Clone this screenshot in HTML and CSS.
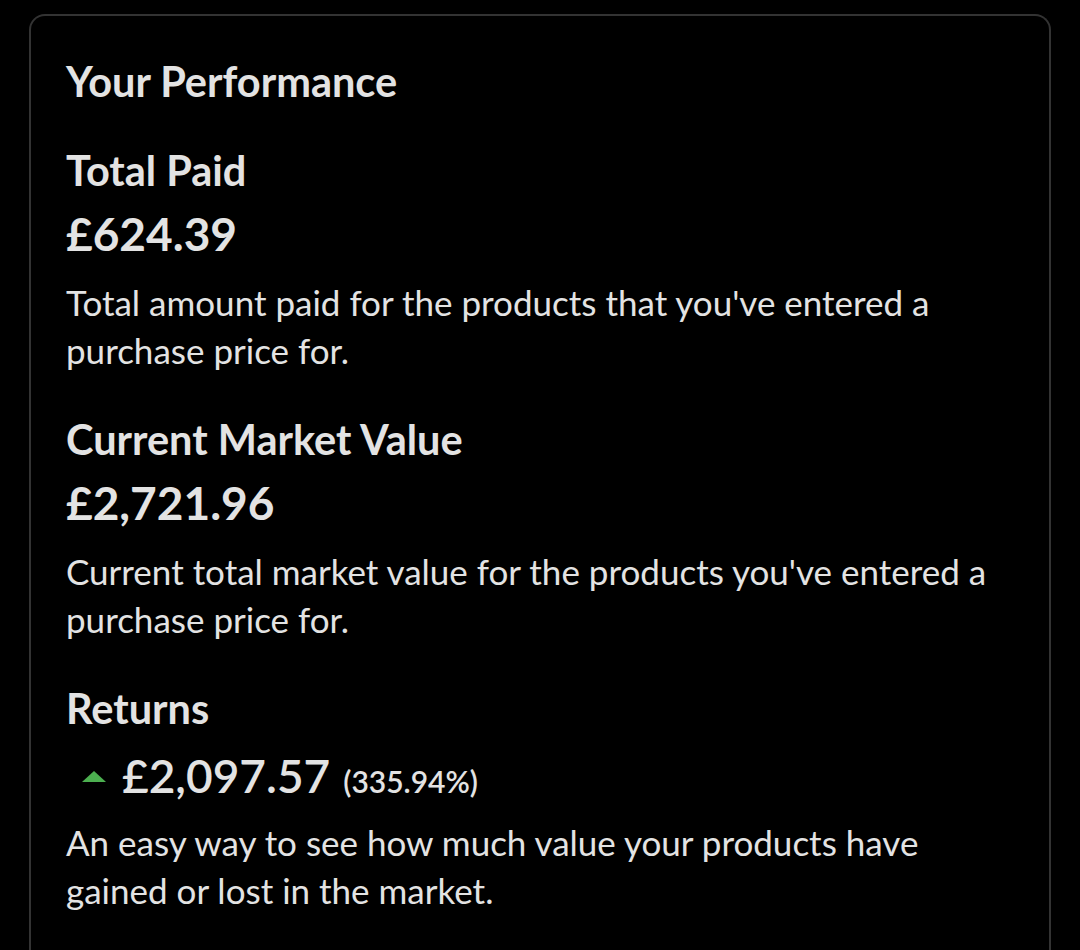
FILE: index.html
```html
<!DOCTYPE html>
<html>
<head>
<meta charset="utf-8">
<link rel="stylesheet" href="styles.css">
</head>
<body>
<div class="card">
  <h2 class="title">Your Performance</h2>
  <section class="stat">
    <h3 class="label">Total Paid</h3>
    <div class="value">£624.39</div>
    <p class="desc">Total amount paid for the products that you've entered a purchase price for.</p>
  </section>
  <section class="stat">
    <h3 class="label">Current Market Value</h3>
    <div class="value">£2,721.96</div>
    <p class="desc">Current total market value for the products you've entered a purchase price for.</p>
  </section>
  <section class="stat">
    <h3 class="label">Returns</h3>
    <div class="returns">
      <svg class="arrow" width="24" height="11" viewBox="0 0 24 11"><polygon points="0,11 12,0 24,11" fill="#4caf50"/></svg>
      <span class="ret-value">£2,097.57</span>
      <span class="ret-pct">(335.94%)</span>
    </div>
    <p class="desc desc-returns">An easy way to see how much value your products have gained or lost in the market.</p>
  </section>
</div>
</body>
</html>
```
FILE: styles.css
```css
html, body {
  margin: 0;
  padding: 0;
  background: #000;
}
body {
  font-family: Lato, "Open Sans", sans-serif;
  color: #e3e3e3;
  padding: 14px 29px 0 29px;
}
.card {
  border: 2px solid #333;
  border-bottom: none;
  border-radius: 16px 16px 0 0;
  padding: 40px 35px 40px 35px;
  height: 950px;
  box-sizing: border-box;
}
.title {
  margin: 0;
  font-size: 41.5px;
  font-weight: 700;
  line-height: 50px;
}
.stat {
  margin-top: 40px;
}
.stat:first-of-type {
  margin-top: 39px;
}
.label {
  margin: 0;
  font-size: 41.5px;
  font-weight: 700;
  line-height: 50px;
}
.value {
  margin-top: 11px;
  font-size: 46px;
  font-weight: 700;
  line-height: 56px;
}
.desc {
  margin: 16px 0 0 0;
  font-size: 35px;
  line-height: 48px;
}
.desc-returns {
  margin-top: 9px;
}
.returns {
  display: flex;
  align-items: baseline;
  margin-top: 15px;
  padding-left: 16px;
  line-height: 56px;
}
.arrow {
  align-self: flex-start;
  margin-top: 23px;
  margin-right: 16px;
}
.ret-value {
  font-size: 46px;
  font-weight: 600;
  margin-right: 13px;
}
.ret-pct {
  font-size: 30px;
  font-weight: 600;
}
```
